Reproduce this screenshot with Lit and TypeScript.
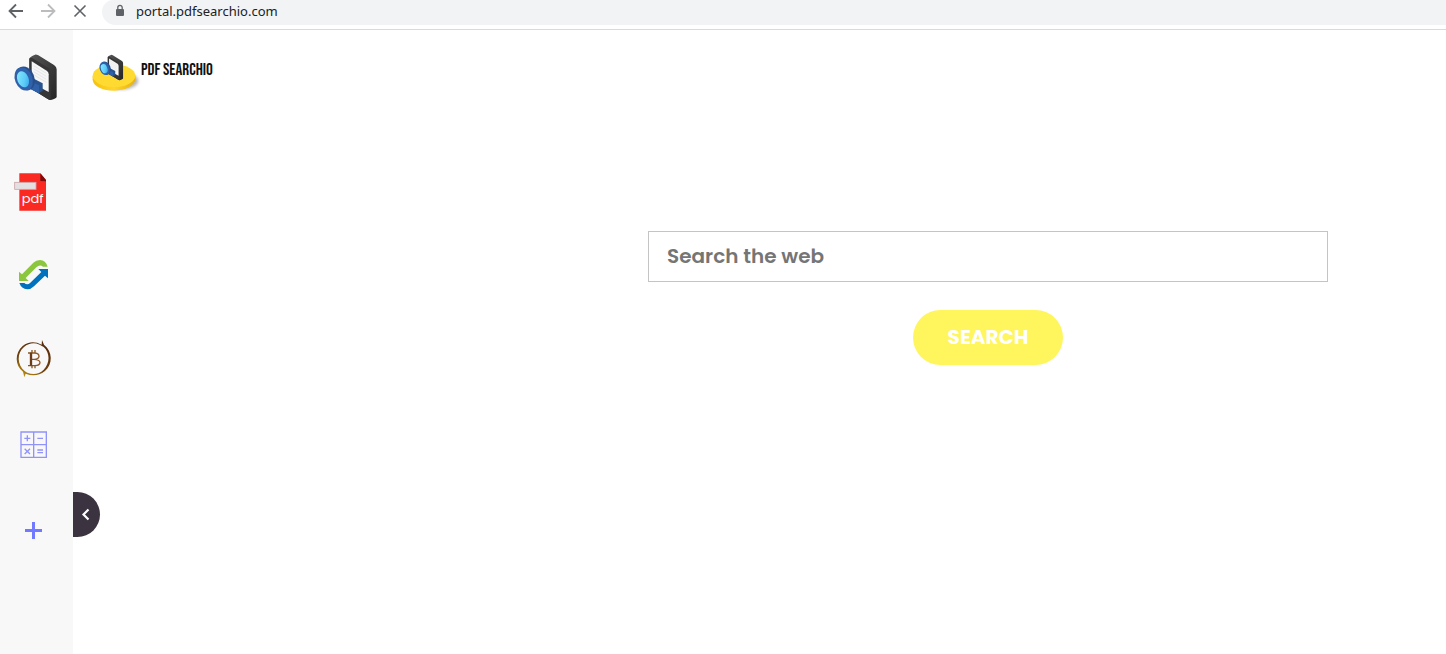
import { LitElement, html, css, svg } from "lit";
import { customElement } from "lit/decorators.js";

const shortcuts = [
  {
    label: "PDF documents",
    art: svg`<g transform="translate(-6 -1) scale(.33333)">
      <path fill="#fa2a22" d="M46 22H109L126 42V134H46Z"/>
      <path fill="#7d0b0b" d="M109 22L126 42V46L109 45Z"/>
      <rect x="32" y="49" width="64" height="21" fill="#e4e0e2" stroke="#c9a5aa" stroke-width="2.500"/>
      <text class="pdf" x="53" y="110">pdf</text>
    </g>`,
  },
  {
    label: "Converter",
    art: svg`<g transform="translate(-6 -2) scale(.33333)">
      <path fill="#8cc63f" d="M45 65L54 73L88 38Q96 30 108 30Q125 31 131 50H117Q108 42 98 51L65 84L74 93H45Z"/>
      <path fill="#0071bc" d="M132 57V85L123 77L90 109Q81 118 70 118Q52 116 46 99H61Q70 107 79 98L112 66L103 57Z"/>
    </g>`,
  },
  {
    label: "Bitcoin",
    art: svg`<defs><linearGradient id="bronze" x1="0" y1="1" x2=".5" y2="0">
        <stop offset="0" stop-color="#d8ad12"/><stop offset=".45" stop-color="#70420f"/><stop offset="1" stop-color="#5a2d0c"/>
      </linearGradient></defs>
      <g transform="translate(-6 -3) scale(.33333)">
      <path fill="url(#bronze)" d="M113 32L114 18L120 32C146 52 147 90 123 111Q96 132 65 119L61 130L57 113C32 94 32 57 56 36Q82 16 113 32ZM107 32Q82 21 60 39C38 57 39 92 62 111Q66 114 70 116Q98 127 119 107C139 87 138 56 119 39Z"/>
      <path fill="none" stroke="#8a5728" stroke-width="4" d="M84 48V56M93 48V56M84 95V103M93 95V103M72 57H93Q105 58 105 67Q104 75 91 76H84M90 76Q108 77 108 86Q107 95 93 95H72"/>
      <path fill="none" stroke="#6b3b16" stroke-width="7" d="M81 56V95"/>
    </g>`,
  },
  {
    label: "Calculator",
    art: svg`<g transform="translate(-6 -2) scale(.33333)" fill="none" stroke="#8f93fb" stroke-width="4">
      <path d="M51 36H127V112H51ZM89 36V112M51 74H127"/>
      <path d="M61 55H79M70 46V64M100 55H117M62 86L78 102M78 86L62 102M100 90H117M100 98H117"/>
    </g>`,
  },
  {
    label: "Add shortcut",
    art: svg`<path fill="#7179ff" d="M15 22H22V15H25V22H32V25H25V32H22V25H15Z"/>`,
  },
];

const device = svg`
  <defs>
    <linearGradient id="lens" x1="0" y1="0" x2="1" y2="1">
      <stop offset="0" stop-color="#8eeeff"/><stop offset=".6" stop-color="#5dccf8"/><stop offset="1" stop-color="#2aa0e8"/>
    </linearGradient>
    <linearGradient id="shell" x1="0" y1="0" x2="1" y2="1">
      <stop offset="0" stop-color="#555"/><stop offset="1" stop-color="#252525"/>
    </linearGradient>
  </defs>
  <path fill="url(#shell)" d="M88 56Q90 50 105 44Q109 43 115 46L162 75Q170 80 170 88V171Q169 175 153 180Q147 180 142 176L94 146Q88 142 88 134Z"/>
  <path fill="#363636" d="M88 56Q91 51 98 55L145 84Q151 88 152 96V180Q148 180 142 176L94 146Q88 142 88 134Z"/>
  <path fill="#f6f6f6" d="M95 64L140 92Q146 96 146 103V156L95 129Z"/>
  <path stroke="#ddd" stroke-width="2" d="M101 77L139 100M101 86L139 109M101 95L139 118M101 104L139 127"/>
  <path fill="#29538f" d="M92 122L103 117L128 130V153L116 160L91 147Z"/>
  <path fill="#2f62aa" d="M89 123L117 136V160L86 144Z"/>
  <ellipse cx="76" cy="115" rx="27" ry="37" transform="rotate(-22 76 115)" fill="#284f8c"/>
  <ellipse cx="71" cy="117" rx="26" ry="36" transform="rotate(-22 71 117)" fill="#3061aa"/>
  <ellipse cx="69" cy="118" rx="17" ry="25" transform="rotate(-22 69 118)" fill="url(#lens)"/>`;

@customElement("browser-bar")
export class BrowserBar extends LitElement {
  static styles = css`
    :host { display: block; border-bottom: 1px solid #d9dadc; background: #fff; }
    .bar { display: flex; height: 25px; padding-bottom: 4px; }
    .tools { display: flex; width: 102px; flex: none; }
    .tool { width: 32px; height: 22px; border: 0; padding: 0; background: none; color: #5f6368; }
    .tool:disabled { color: #babcbe; }
    .tool svg { display: block; width: 32px; height: 22px; }
    .address { display: flex; flex: 1; min-width: 0; align-items: flex-start; background: #f1f3f4; border-radius: 12px 0 0 14px; }
    .lock { flex: none; width: 34px; height: 22px; }
    input { flex: 1; min-width: 0; height: 22px; padding: 0; border: 0; outline: 0; background: none; color: #202124; font: 13px/22px "Noto Sans", sans-serif; }
  `;

  render() {
    return html`<div class="bar">
      <div class="tools">
        <button class="tool" aria-label="Back"><svg viewBox="0 0 32 22" fill="none" stroke="currentColor" stroke-width="1.800"><path d="M23 11H10M16 4.500L9.500 11L16 17.500"/></svg></button>
        <button class="tool" aria-label="Forward" disabled><svg viewBox="0 0 32 22" fill="none" stroke="currentColor" stroke-width="1.800"><path d="M9 11H22M16 4.500L22.500 11L16 17.500"/></svg></button>
        <button class="tool" aria-label="Stop loading"><svg viewBox="0 0 32 22" fill="none" stroke="currentColor" stroke-width="1.600"><path d="M10.500 5.500L21.500 16.500M21.500 5.500L10.500 16.500"/></svg></button>
      </div>
      <div class="address">
        <svg class="lock" viewBox="0 0 34 22" aria-hidden="true"><rect x="14" y="9" width="8" height="7" rx="1" fill="#5f6368"/><path d="M15.800 9V7.500A2.200 2.200 0 0 1 20.200 7.500V9" fill="none" stroke="#5f6368" stroke-width="1.300"/></svg>
        <input aria-label="Address" value="portal.pdfsearchio.com" spellcheck="false">
      </div>
    </div>`;
  }
}

@customElement("side-rail")
export class SideRail extends LitElement {
  static styles = css`
    :host { display: block; width: 73px; flex: none; background: #f8f8f8; }
    .home { display: block; padding-top: 10px; }
    .home svg { display: block; width: 76px; height: 70px; margin-right: -3px; }
    nav { display: flex; flex-direction: column; padding-top: 38px; }
    .item { display: flex; align-items: center; height: 85px; padding-left: 10px; }
    .item svg { display: block; width: 48px; height: 48px; }
    .pdf { fill: #fff; font: 400 39px Poppins, "Open Sans", sans-serif; }
  `;

  render() {
    return html`<a class="home" href="#" aria-label="Home"><svg viewBox="0 0 228 210">${device}</svg></a>
      <nav aria-label="Shortcuts">
        ${shortcuts.map((s) => html`<a class="item" href="#" aria-label=${s.label}><svg viewBox="0 0 48 48">${s.art}</svg></a>`)}
      </nav>`;
  }
}

@customElement("app-root")
export class AppRoot extends LitElement {
  static styles = css`
    :host { display: flex; flex-direction: column; min-height: 100vh; background: #fff; font-family: Poppins, "Open Sans", sans-serif; }
    .body { display: flex; flex: 1; }
    main { position: relative; flex: 1; min-width: 0; }
    .brand { display: flex; width: fit-content; align-items: center; margin: 16px 0 0 11px; color: #111; text-decoration: none; }
    .brand svg { width: 57px; height: 54px; }
    .name { padding-bottom: 6px; font: 400 17px/20px "Bebas Neue", "Roboto Condensed", sans-serif; white-space: nowrap; }
    .search { display: flex; flex-direction: column; align-items: center; gap: 28px; width: 680px; max-width: 80%; margin: 131px 118px 0 auto; }
    .query { box-sizing: border-box; width: 100%; height: 51px; padding: 0 18px 2px; border: 1px solid #c4c4c4; border-radius: 0; background: #fff; outline: 0; color: #333; font: 600 20px/30px Poppins, "Open Sans", sans-serif; }
    .query::placeholder { color: #757575; opacity: 1; }
    .submit { height: 55px; padding: 0 35px 2px; border: 0; border-radius: 28px; background: #fff55c; color: #fff; font: 700 20px/30px Poppins, "Open Sans", sans-serif; }
    .collapse { position: absolute; left: 0; top: 462px; width: 27px; height: 45px; padding: 0; border: 0; border-radius: 0 23px 23px 0; background: #3c3341; }
    .collapse svg { display: block; width: 27px; height: 45px; }
  `;

  render() {
    return html`<browser-bar></browser-bar>
      <div class="body">
        <side-rail></side-rail>
        <main>
          <a class="brand" href="#">
            <svg viewBox="0 0 171 162" aria-hidden="true">
              <defs>
                <filter id="soft"><feGaussianBlur stdDeviation="5"/></filter>
                <linearGradient id="gold"><stop offset="0" stop-color="#f5c20a"/><stop offset=".5" stop-color="#ffd52e"/><stop offset="1" stop-color="#e9b10d"/></linearGradient>
              </defs>
              <ellipse cx="108" cy="105" rx="55" ry="26" fill="#888" opacity=".6" filter="url(#soft)"/>
              <path fill="url(#gold)" d="M26 90V102C28 122 56 134 90 134S151 120 154 100V88Z"/>
              <ellipse cx="90" cy="89" rx="64" ry="34" fill="#ffdb32"/>
              <g transform="translate(22 2) scale(.56)">${device}</g>
            </svg>
            <span class="name">PDF SEARCHIO</span>
          </a>
          <form class="search" @submit=${(e: Event) => e.preventDefault()}>
            <input class="query" type="search" aria-label="Search the web" placeholder="Search the web">
            <button class="submit" type="submit">SEARCH</button>
          </form>
          <button class="collapse" aria-label="Collapse sidebar"><svg viewBox="0 0 27 45"><path d="M15.500 17.500L10.500 22.500L15.500 27.500" fill="none" stroke="#fff" stroke-width="2.200"/></svg></button>
        </main>
      </div>`;
  }
}
